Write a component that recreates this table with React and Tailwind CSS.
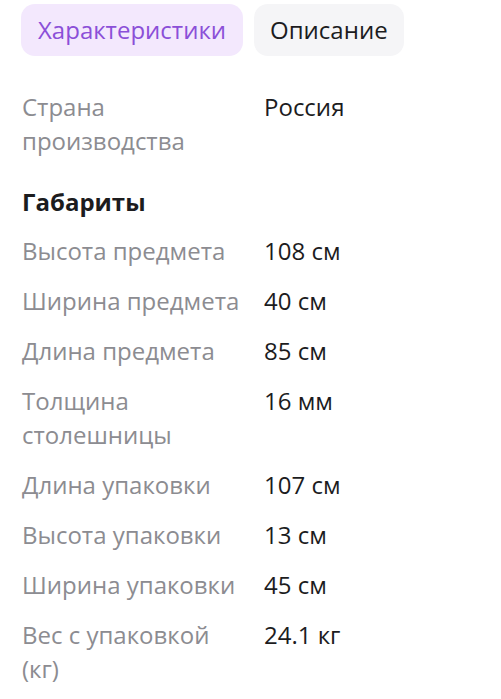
export default function App() {
  const rows = [
    ["Высота предмета", "108 см"],
    ["Ширина предмета", "40 см"],
    ["Длина предмета", "85 см"],
    ["Толщина столешницы", "16 мм"],
    ["Длина упаковки", "107 см"],
    ["Высота упаковки", "13 см"],
    ["Ширина упаковки", "45 см"],
    ["Вес с упаковкой (кг)", "24.1 кг"],
  ];
  return (
    <div className="w-[501px] h-[699px] bg-white overflow-hidden font-['Open_Sans',sans-serif]">
      <div className="flex gap-[11px] pl-[21px] pt-[4px]">
        <div className="h-[52px] px-[17px] flex items-center rounded-[14px] bg-[#f3e8fd] text-[#8b4fd8] text-[24px]">Характеристики</div>
        <div className="h-[52px] px-[16px] flex items-center rounded-[14px] bg-[#f5f5f7] text-[#1c1c1e] text-[24px]">Описание</div>
      </div>
      <div className="pl-[22px] pt-[34px] text-[24px] leading-[34px]">
        <div className="grid grid-cols-[242px_1fr]">
          <div className="text-[#8c8c91] w-[190px]">Страна производства</div>
          <div className="text-[#1c1c1e]">Россия</div>
        </div>
        <div className="mt-[27px] font-bold text-[#1c1c1e]">Габариты</div>
        <div className="mt-[15px] flex flex-col gap-[16px]">
          {rows.map(([k, v]) => (
            <div key={k} className="grid grid-cols-[242px_1fr]">
              <div className="text-[#8c8c91] pr-[20px]">{k}</div>
              <div className="text-[#1c1c1e]">{v}</div>
            </div>
          ))}
        </div>
      </div>
    </div>
  );
}
